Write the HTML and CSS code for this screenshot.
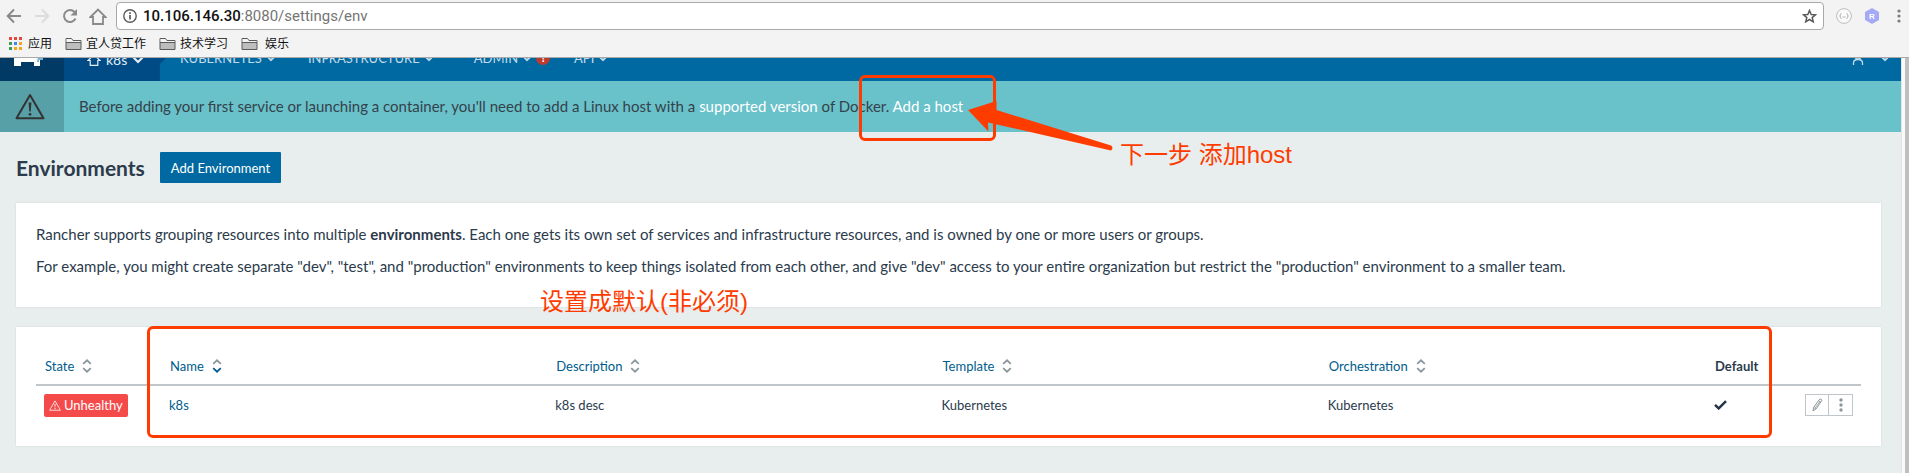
FILE: index.html
```html
<!DOCTYPE html>
<html lang="en">
<head>
<meta charset="utf-8">
<title>Environments</title>
<link rel="stylesheet" href="styles.css">
</head>
<body>
<svg class="defs" aria-hidden="true">
  <symbol id="folder" viewBox="0 0 17 14"><path d="M1 12.500V1.500h5.500l1.500 2h8v9z" fill="#bdbdbd" stroke="#5a5a5a"/><path d="M1.500 2h4.700l1.500 2H15.500v1.500H1.500z" fill="#f4f4f4"/><path d="M1 5.500h15" stroke="#5a5a5a"/></symbol>
  <symbol id="chev" viewBox="0 0 12 8"><path d="M1.500 1.500 6 6l4.500-4.500" fill="none" stroke="currentColor" stroke-width="2.200"/></symbol>
  <symbol id="warn" viewBox="0 0 30 27"><path d="M15 2 28.500 25.300h-27z" fill="none" stroke="currentColor" stroke-width="2" stroke-linejoin="round"/><path d="M13.600 9.500h2.800l-.7 9h-1.400z" fill="currentColor"/><circle cx="15" cy="21.300" r="1.400" fill="currentColor"/></symbol>
  <symbol id="sort" viewBox="0 0 10 14"><path d="M1.200 4.800 5 1.300l3.800 3.500" fill="none" stroke="#8b979c" stroke-width="1.800"/><path d="M1.200 9.200 5 12.700l3.800-3.500" fill="none" stroke="currentColor" stroke-width="1.800"/></symbol>
</svg>

<header class="chrome">
  <div class="toolbar">
    <button class="tool" aria-label="Back"><svg width="16" height="16" viewBox="0 0 16 16"><path d="M15 8H2M8 1.500 1.700 8 8 14.500" fill="none" stroke="#8a8a8a" stroke-width="2"/></svg></button>
    <button class="tool" aria-label="Forward"><svg width="16" height="16" viewBox="0 0 16 16"><path d="M1 8h13M8 1.500 14.300 8 8 14.500" fill="none" stroke="#dcdcdc" stroke-width="2"/></svg></button>
    <button class="tool" aria-label="Reload"><svg width="16" height="16" viewBox="0 0 16 16"><path d="M13.500 10.500A6 6 0 1 1 12.500 4" fill="none" stroke="#8a8a8a" stroke-width="2"/><path d="M15 1v6.500H8.500z" fill="#8a8a8a"/></svg></button>
    <button class="tool" aria-label="Home"><svg width="18" height="17" viewBox="0 0 18 17"><path d="M1.500 9 9 1.500 16.500 9H14v7H4V9z" fill="none" stroke="#8a8a8a" stroke-width="1.800"/></svg></button>
    <div class="address">
      <svg width="14" height="14" viewBox="0 0 14 14"><circle cx="7" cy="7" r="6.200" fill="none" stroke="#5a5a5a" stroke-width="1.400"/><path d="M7 6v4.500M7 3.300v1.700" stroke="#5a5a5a" stroke-width="1.700"/></svg>
      <div class="url" role="textbox" aria-label="Address" contenteditable="true" spellcheck="false"><span class="url-host">10.106.146.30</span>:8080/settings/env</div>
      <svg width="15" height="14" viewBox="0 0 15 14"><path d="m7.500 1.500 1.700 4 4.300.3-3.300 2.800 1.100 4.200-3.800-2.300-3.800 2.300 1.100-4.200L1.500 5.800l4.300-.3z" fill="none" stroke="#5a5a5a" stroke-width="1.500"/></svg>
    </div>
    <div class="extensions">
      <svg width="16" height="16" viewBox="0 0 16 16"><circle cx="8" cy="8" r="7.400" fill="#fafafa" stroke="#bdbdbd"/><path d="M5.500 5.500q-1.200 0-1 1.200t-1 1.300q1.200.1 1 1.300t1 1.200M10.500 5.500q1.200 0 1 1.200t1 1.300q-1.200.1-1 1.300t-1 1.200M6.500 9h3" fill="none" stroke="#aaa" stroke-width=".9"/></svg>
      <svg width="16" height="16" viewBox="0 0 16 16"><path d="m8 0 7 4v8l-7 4-7-4V4z" fill="#a6aaf5"/><text x="8" y="11" text-anchor="middle" class="ext-letter">R</text></svg>
      <svg width="4" height="14" viewBox="0 0 4 14" fill="#7c7c7c"><circle cx="2" cy="2" r="1.600"/><circle cx="2" cy="7" r="1.600"/><circle cx="2" cy="12" r="1.600"/></svg>
    </div>
  </div>
  <nav class="bookmarks" aria-label="Bookmarks">
    <a href="#" class="bookmark"><svg width="13" height="13" viewBox="0 0 13 13"><path d="M0 0h3v3H0zM5 0h3v3H5zM10 0h3v3h-3z" fill="#e8453c"/><path d="M0 5h3v3H0zM0 10h3v3H0z" fill="#3a9b55"/><path d="M5 5h3v3H5z" fill="#4384f3"/><path d="M10 5h3v3h-3zM5 10h3v3H5zM10 10h3v3h-3z" fill="#f5a71c"/></svg>应用</a>
    <a href="#" class="bookmark folder"><svg width="17" height="14"><use href="#folder"/></svg>宜人贷工作</a>
    <a href="#" class="bookmark folder"><svg width="17" height="14"><use href="#folder"/></svg>技术学习</a>
    <a href="#" class="bookmark folder wide"><svg width="17" height="14"><use href="#folder"/></svg>娱乐</a>
  </nav>
</header>

<div class="viewport">
<div class="page">
  <div class="nav-window">
    <nav class="nav">
      <a href="#" class="logo" aria-label="Rancher"><svg width="32" height="24" viewBox="0 0 32 24"><path d="M1 10q0-2 2-2h19V2h2v4h4V2h2v8q0 2-2 3h-1v10h-6v-4H8v4H1z" fill="#fff"/><path d="M25 13q3 2 5 0v4h-4v2h-2z" fill="#7fb4d6"/></svg></a>
      <a href="#" class="env"><svg width="14" height="12" viewBox="0 0 14 12"><path d="M1 6.500 7 .8l6 5.700h-2.200v4.800H3.200V6.500z" fill="none" stroke="currentColor" stroke-width="1.200"/></svg>k8s<svg width="12" height="8"><use href="#chev"/></svg></a>
      <div class="menu">
        <a href="#">KUBERNETES<svg width="10" height="7" viewBox="0 0 12 8"><use href="#chev"/></svg></a>
        <a href="#">INFRASTRUCTURE<svg width="10" height="7" viewBox="0 0 12 8"><use href="#chev"/></svg></a>
        <a href="#">ADMIN<svg width="10" height="7" viewBox="0 0 12 8"><use href="#chev"/></svg><span class="alert">!</span></a>
        <a href="#">API<svg width="10" height="7" viewBox="0 0 12 8"><use href="#chev"/></svg></a>
      </div>
      <button class="user" aria-label="Account"><svg width="12" height="13" viewBox="0 0 12 13"><circle cx="6" cy="4" r="3" fill="none" stroke="currentColor" stroke-width="1.300"/><path d="M1.500 13V11Q1.500 7.500 6 7.500t4.500 3.500v2" fill="none" stroke="currentColor" stroke-width="1.300"/></svg><svg width="10" height="7" viewBox="0 0 12 8"><use href="#chev"/></svg></button>
    </nav>
  </div>

  <section class="banner">
    <div class="banner-icon"><svg width="30" height="27"><use href="#warn"/></svg></div>
    <p class="banner-text">Before adding your first service or launching a container, you'll need to add a Linux host with a <a href="#">supported version</a> of Docker. <a href="#">Add a host</a></p>
    <div class="mark mark-host"></div>
    <svg class="arrow" width="146" height="52" viewBox="0 0 146 52"><path d="M0 10 28.500 1v9L143 45.500q3 2.500 0 5L20 22.500l.5 9z" fill="#ff3c00"/></svg>
    <span class="note note-host">下一步 添加host</span>
  </section>

  <main class="content">
    <div class="heading"><h1>Environments</h1><button class="primary">Add Environment</button></div>

    <section class="panel intro">
      <p>Rancher supports grouping resources into multiple <b>environments</b>. Each one gets its own set of services and infrastructure resources, and is owned by one or more users or groups.</p>
      <p>For example, you might create separate "dev", "test", and "production" environments to keep things isolated from each other, and give "dev" access to your entire organization but restrict the "production" environment to a smaller team.</p>
      <span class="note note-default">设置成默认(非必须)</span>
    </section>

    <section class="panel list">
      <table>
        <colgroup><col class="c-state"><col><col><col><col><col class="c-default"><col class="c-actions"></colgroup>
        <thead><tr>
          <th><a href="#">State<svg width="10" height="14"><use href="#sort"/></svg></a></th>
          <th><a href="#" class="sorted">Name<svg width="10" height="14"><use href="#sort"/></svg></a></th>
          <th><a href="#">Description<svg width="10" height="14"><use href="#sort"/></svg></a></th>
          <th><a href="#">Template<svg width="10" height="14"><use href="#sort"/></svg></a></th>
          <th><a href="#">Orchestration<svg width="10" height="14"><use href="#sort"/></svg></a></th>
          <th class="plain">Default</th>
          <th></th>
        </tr></thead>
        <tbody><tr>
          <td><span class="badge"><svg width="12" height="11" viewBox="0 0 30 27"><use href="#warn"/></svg>Unhealthy</span></td>
          <td><a href="#">k8s</a></td>
          <td>k8s desc</td>
          <td>Kubernetes</td>
          <td>Kubernetes</td>
          <td><svg class="check" width="13" height="10" viewBox="0 0 13 10" role="img" aria-label="Default"><path d="m1 4.800 3.700 3.600L12 1.200" fill="none" stroke="#243447" stroke-width="2.500"/></svg></td>
          <td><div class="actions">
            <button aria-label="Edit"><svg width="11" height="14" viewBox="0 0 11 14"><path d="m1 13 .6-3.500L7.500 1.300Q9 .3 10 2.200L4 11z" fill="none" stroke="#8b979c"/><path d="m3.200 10 5-7M1.600 9.500 4 11M6.500 2.700l2.400 1.700" fill="none" stroke="#8b979c" stroke-width=".8"/></svg></button><button aria-label="More"><svg width="4" height="14" viewBox="0 0 4 14" fill="#8b979c"><circle cx="2" cy="2" r="1.700"/><circle cx="2" cy="7" r="1.700"/><circle cx="2" cy="12" r="1.700"/></svg></button>
          </div></td>
        </tr></tbody>
      </table>
      <div class="mark mark-list"></div>
    </section>
  </main>
</div>
<div class="scrollbar"></div>
</div>
</body>
</html>
```

FILE: styles.css
```css
* { box-sizing: border-box; }
html, body { height: 100%; }
body {
  margin: 0;
  display: flex;
  flex-direction: column;
  overflow: hidden;
  font: 15px/22px Lato, "Noto Sans CJK SC", sans-serif;
  color: #2b3b4c;
  background: #e8eeee;
}
h1, p { margin: 0; }
a { text-decoration: none; color: inherit; }
button { font: inherit; color: inherit; border: 0; padding: 0; background: none; }
svg { flex: none; }
.defs { position: absolute; width: 0; height: 0; }

/* Browser chrome */
.chrome {
  flex: none;
  background: #f3f3f3;
  border-bottom: 1px solid #a9a9a9;
  font-family: Roboto, "Noto Sans CJK SC", sans-serif;
}
.toolbar { display: flex; align-items: center; gap: 12px; padding: 2px 8px 0 6px; }
.tool { display: flex; justify-content: center; width: 16px; }
.address {
  flex: 1;
  display: flex;
  align-items: center;
  gap: 6px;
  height: 28px;
  margin-left: -2px;
  padding: 0 6px;
  background: #fff;
  border: 1px solid #a9a9a9;
  border-radius: 4px;
}
.url { flex: 1; font-size: 15px; line-height: 20px; color: #757575; outline: 0; }
.url-host { color: #111; font-weight: 500; }
.extensions { display: flex; align-items: center; gap: 12px; }
.extensions svg:last-child { margin-left: 5px; }
.ext-letter { font: bold 8px "Liberation Sans", sans-serif; fill: #fff; }
.bookmarks { display: flex; align-items: center; gap: 13px; height: 27px; padding-left: 9px; }
.bookmark { display: flex; align-items: center; gap: 6px; font-size: 12px; line-height: 18px; color: #111; }
.bookmark.folder { gap: 4px; }
.bookmark.wide { gap: 7px; }

.viewport { flex: 1; min-height: 0; display: flex; }
.page { flex: 1; min-width: 0; }
.scrollbar { width: 8px; background: #fafafa; border-left: 1px solid #e4e4e4; border-right: 4px solid #bfbfbf; }

/* Main navigation, scrolled partly out of view */
.nav-window { display: flex; flex-direction: column; justify-content: flex-end; height: 23px; overflow: hidden; }
.nav { flex: none; display: flex; height: 50px; background: #0069a1; color: #c3dbe8; font-size: 13px; }
.nav a, .user { display: flex; align-items: center; }
.logo { width: 64px; background: #003a65; padding: 0 0 2px 13px; }
.env {
  width: 102px;
  margin-right: 14px;
  gap: 5px;
  padding: 8px 0 0 23px;
  background: #004b85;
  color: #e3edf3;
  font-size: 14px;
  clip-path: polygon(0 0, 100% 0, 100% 27px, 94% 33px, 94% 100%, 0 100%);
}
.menu { display: flex; gap: 24px; }
.menu a { gap: 4px; padding-top: 4px; }
.menu a:nth-child(1) { margin-right: 8px; }
.menu a:nth-child(2) { margin-right: 16px; }
.alert {
  width: 14px;
  height: 14px;
  border-radius: 7px;
  background: #c0392b;
  color: #fff;
  font-weight: 700;
  font-size: 12px;
  line-height: 14px;
  text-align: center;
}
.user { margin-left: auto; gap: 16px; padding: 4px 11px 0 0; }

/* Notice */
.banner { position: relative; display: flex; height: 51px; background: #69c1ca; color: #35424a; }
.banner-icon { display: flex; align-items: center; width: 64px; padding-left: 15px; background: #58a0a7; color: #333; }
.banner-text { align-self: center; padding: 0 0 1px 15px; }
.banner-text a { color: #fff; }

/* Annotations drawn over the page */
.mark { position: absolute; border: 3px solid #ff3c00; border-radius: 6px; pointer-events: none; }
.mark-host { left: 859px; top: -6px; width: 137px; height: 66px; }
.arrow { position: absolute; left: 968px; top: 19px; }
.note {
  position: absolute;
  font: 24px/32px "Liberation Sans", "Noto Sans CJK SC", sans-serif;
  color: #ff3c00;
  white-space: nowrap;
}
.note-host { left: 1120px; top: 58px; }
.note-default { left: 524px; bottom: -11px; }

/* Content */
.content { padding: 20px 20px 0 16px; }
.heading { display: flex; align-items: center; gap: 15px; }
h1 { font-size: 21px; line-height: 30px; font-weight: 700; }
.primary { height: 31px; padding: 0 11px; border-radius: 1px; background: #0069a1; color: #fff; font-size: 13px; }
.panel { position: relative; margin-top: 20px; padding: 20px; background: #fff; box-shadow: 0 0 2px rgba(0, 0, 0, .1); }
.intro { padding-bottom: 30px; }
.intro p + p { margin-top: 10px; }
.intro b { font-weight: 700; }
.list { padding-bottom: 22px; }
table { width: 100%; table-layout: fixed; border-collapse: collapse; font-size: 13px; line-height: 20px; }
.c-state { width: 125px; }
.c-default { width: 80px; }
.c-actions { width: 75px; }
th { height: 38px; padding: 0 9px; border-bottom: 2px solid #bfc5c9; text-align: left; font-weight: 400; }
th a { display: flex; align-items: center; gap: 8px; color: #005c8c; }
th a svg { color: #8b979c; }
th a.sorted svg { color: #005c8c; }
th.plain { font-weight: 700; }
td { height: 39px; padding: 0 8px; }
td > a { color: #005c8c; }
.badge { display: inline-flex; align-items: center; gap: 3px; height: 23px; padding: 0 5px; border-radius: 2px; background: #f44a4a; color: #fff; vertical-align: middle; }
.check { display: block; }
.actions { display: flex; justify-content: flex-end; }
.actions button { display: flex; align-items: center; justify-content: center; width: 24px; height: 22px; border: 1px solid #bfc5c9; }
.actions button + button { width: 25px; margin-left: -1px; }
.mark-list { left: 131px; right: 109px; top: -1px; bottom: 8px; }
```
